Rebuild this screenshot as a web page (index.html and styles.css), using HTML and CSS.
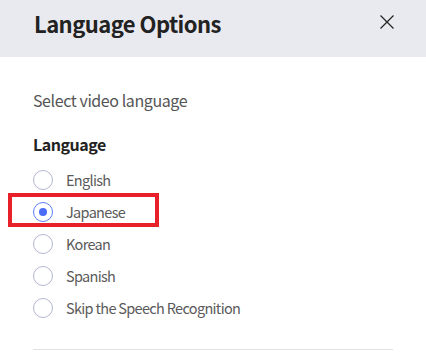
FILE: index.html
```html
<!DOCTYPE html>
<html>
<head>
<meta charset="utf-8">
<link rel="stylesheet" href="styles.css">
</head>
<body>
<div class="modal">
  <header class="modal-header">
    <h1 class="title">Language Options</h1>
    <button class="close" aria-label="Close">
      <svg width="14" height="14" viewBox="0 0 14 14"><path d="M0.5 0.5L13.5 13.5M13.5 0.5L0.5 13.5" stroke="#222" stroke-width="1.2" fill="none"/></svg>
    </button>
  </header>
  <div class="modal-body">
    <p class="subtitle">Select video language</p>
    <h2 class="group-label">Language</h2>
    <ul class="options">
      <li class="option"><span class="radio"></span><span class="label">English</span></li>
      <li class="option selected"><span class="radio"></span><span class="label">Japanese</span><span class="highlight"></span></li>
      <li class="option"><span class="radio"></span><span class="label">Korean</span></li>
      <li class="option"><span class="radio"></span><span class="label">Spanish</span></li>
      <li class="option"><span class="radio"></span><span class="label">Skip the Speech Recognition</span></li>
    </ul>
    <hr class="divider">
  </div>
</div>
</body>
</html>
```

FILE: styles.css
```css
* { box-sizing: border-box; }
html, body { margin: 0; padding: 0; background: #fff; }
body {
  font-family: "Noto Sans CJK KR", "Noto Sans", sans-serif;
  width: 426px;
  height: 360px;
  overflow: hidden;
}
.modal { width: 426px; }
.modal-header {
  height: 57px;
  background: #e9eaef;
  display: flex;
  align-items: flex-start;
  justify-content: space-between;
  padding: 0 32px 0 34px;
}
.title {
  margin: 0;
  font-size: 22px;
  font-weight: 700;
  line-height: 46px;
  color: #222;
  letter-spacing: -0.55px;
}
.close {
  border: 0;
  background: none;
  padding: 0;
  margin-top: 15px;
  width: 14px;
  height: 14px;
  display: flex;
}
.modal-body {
  padding: 31px 33px 0 33px;
}
.subtitle {
  margin: 0;
  font-size: 16px;
  line-height: 24px;
  color: #555;
  letter-spacing: -0.42px;
}
.group-label {
  margin: 20px 0 0 0;
  font-size: 16px;
  font-weight: 700;
  line-height: 24px;
  color: #222;
  letter-spacing: -0.5px;
}
.options {
  list-style: none;
  margin: 8px 0 0 0;
  padding: 0;
}
.option {
  position: relative;
  display: flex;
  align-items: center;
  height: 32px;
}
.radio {
  width: 20px;
  height: 20px;
  border-radius: 50%;
  border: 1px solid #b3b6cf;
  margin-right: 13px;
  display: flex;
  align-items: center;
  justify-content: center;
  flex: none;
}
.selected .radio { border-color: #5d7ef6; }
.selected .radio::after {
  content: "";
  width: 8px;
  height: 8px;
  border-radius: 50%;
  background: #4a6cf7;
}
.label {
  font-size: 14.5px;
  line-height: 32px;
  color: #5a5a5a;
  letter-spacing: -0.68px;
}
.highlight {
  position: absolute;
  left: -25px;
  top: -3px;
  width: 151px;
  height: 34px;
  border: 4px solid #e8202a;
}
.divider {
  margin: 25px 0 0 0;
  border: 0;
  border-top: 1px solid #e2e2e2;
  height: 0;
}
```
